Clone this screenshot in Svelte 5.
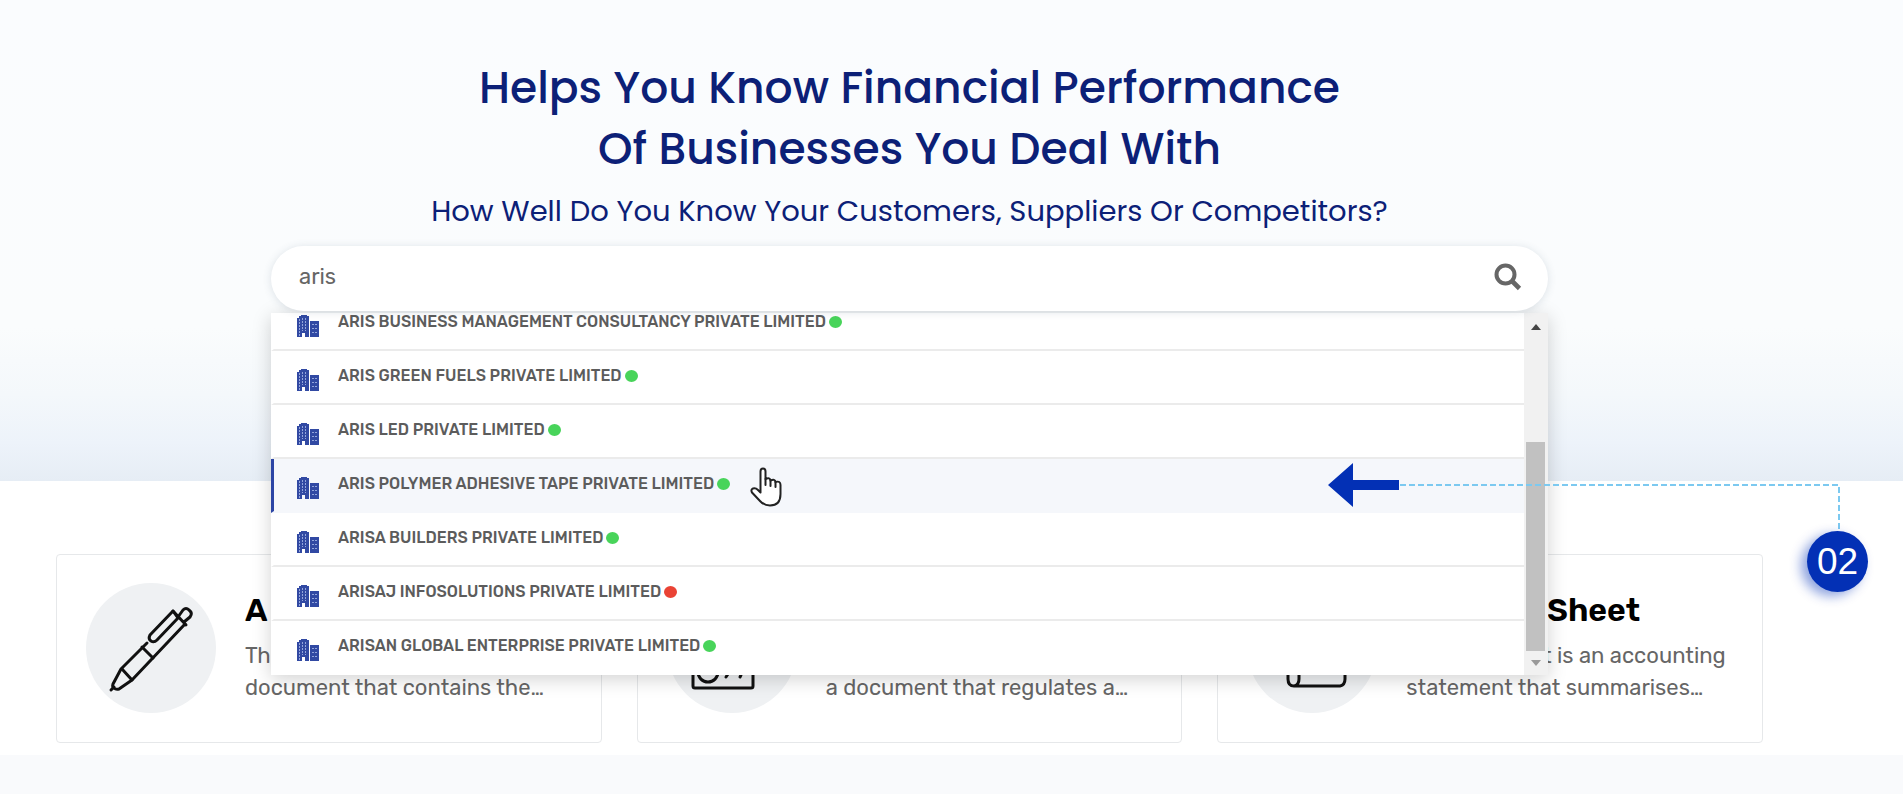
<script>
  const companies = [
    { name: 'ARIS BUSINESS MANAGEMENT CONSULTANCY PRIVATE LIMITED', active: true },
    { name: 'ARIS GREEN FUELS PRIVATE LIMITED', active: true },
    { name: 'ARIS LED PRIVATE LIMITED', active: true },
    { name: 'ARIS POLYMER ADHESIVE TAPE PRIVATE LIMITED', active: true },
    { name: 'ARISA BUILDERS PRIVATE LIMITED', active: true },
    { name: 'ARISAJ INFOSOLUTIONS PRIVATE LIMITED', active: false },
    { name: 'ARISAN GLOBAL ENTERPRISE PRIVATE LIMITED', active: true }
  ];
  const selected = 3;

  const cards = [
    { icon: 'pen', title: ['A', 'OA'], lines: ['The AOA', 'document that contains the…'] },
    { icon: 'seal', title: ['M', 'OA'], lines: ['The MOA is', 'a document that regulates a…'] },
    { icon: 'scroll', title: ['Balance', 'Sheet'], lines: ['Balance sheet is an accounting', 'statement that summarises…'] }
  ];

  let query = $state('aris');
</script>

<div class="page">
  <header class="hero">
    <h1>Helps You Know Financial Performance<br />Of Businesses You Deal With</h1>
    <p class="sub">How Well Do You Know Your Customers, Suppliers Or Competitors?</p>

    <div class="search">
      <form class="bar" onsubmit={(e) => e.preventDefault()}>
        <input type="text" aria-label="Company name" bind:value={query} />
        <button type="submit" aria-label="Search">
          <svg viewBox="0 0 28 28" width="28" height="28">
            <circle cx="11.5" cy="11.5" r="9" fill="none" stroke="#666" stroke-width="4" />
            <path d="M18.5 18.5L25.5 25.5" stroke="#666" stroke-width="4.6" />
          </svg>
        </button>
      </form>

      <div class="menu">
        <ul>
          {#each companies as c, i}
            <li class:selected={i === selected}>
              <a href="#company">
                <svg class="building" viewBox="0 0 22 22" width="22" height="22">
                  <path fill="#3149a3" d="M0 3H2V1H4V0H10V1H12V22H8V18H5V22H0ZM13 6H22V22H13Z" />
                  <path stroke="#93a5dc" stroke-width="1" stroke-dasharray="2 1" fill="none"
                    d="M2.500 4V21M5.500 3V16M8.500 3V16" />
                  <path stroke="#93a5dc" stroke-width="1" stroke-dasharray="2 1" fill="none"
                    d="M15 9.500H21M15 13.500H21M15 17.500H21" />
                </svg>
                <span class="name">{c.name}</span>
                <span class="dot" class:off={!c.active}></span>
              </a>
            </li>
          {/each}
        </ul>
        <div class="track">
          <svg viewBox="0 0 10 6" width="10" height="6"><path d="M0 6L5 0L10 6Z" fill="#444" /></svg>
          <div class="thumb"></div>
          <svg viewBox="0 0 10 6" width="10" height="6"><path d="M0 0L5 6L10 0Z" fill="#999" /></svg>
        </div>

        <svg class="pointer" viewBox="0 0 32 40" width="32" height="40">
          <path fill="#fff" stroke="#222" stroke-width="2" stroke-linejoin="round" stroke-linecap="round"
            d="M10.500 22V4.500Q10.500 1.500 13 1.500Q15.500 1.500 15.500 4.500V12Q20 10 20.500 13.500Q25 11.500 25.500 15Q30.500 13.500 30.500 18V27Q30.500 38.500 20 38.500Q14 38.500 10 34L2 25.500Q0.500 22.500 3 21.500Q5.500 20.500 8 23L10.500 25.500V22" />
          <path fill="none" stroke="#222" stroke-width="2" stroke-linecap="round" d="M15.500 12V18M20.500 13.500V19M25.500 15V20" />
        </svg>
      </div>
    </div>
  </header>

  <main>
    {#each cards as card}
      <article>
        <div class="round">
          {#if card.icon === 'pen'}
            <svg viewBox="0 0 130 130" width="130" height="130">
              <g fill="none" stroke="#111" stroke-width="3" stroke-linecap="round" stroke-linejoin="round">
                <path d="M61 60L35 86L27 101Q26 104 28 105Q30 107 33 106L46 97L99 41" />
                <path d="M28 104L25 107" />
                <path d="M36 86L46 97" />
                <path d="M56 64L67 75" />
                <path d="M87 28L64 52Q62 56 65 58Q68 60 71 57L92 35Z" />
                <path d="M87 28L100 42M92 34L97 27Q100 24 103 27Q107 30 104 34L98 39" />
              </g>
            </svg>
          {:else if card.icon === 'seal'}
            <svg viewBox="0 0 130 130" width="130" height="130">
              <g fill="none" stroke="#111" stroke-width="3" stroke-linecap="round" stroke-linejoin="round">
                <rect x="26" y="28" width="60" height="77" rx="2" />
                <path d="M36 42H76M36 54H76M36 66H76" />
                <circle cx="41" cy="89" r="10" />
                <path d="M59 94L61 91M73 94L74 92" />
              </g>
            </svg>
          {:else}
            <svg viewBox="0 0 130 130" width="130" height="130">
              <g fill="none" stroke="#111" stroke-width="3" stroke-linecap="round" stroke-linejoin="round">
                <path d="M52 90V32H94V90H98V96Q98 102 93 103H47Q41 103 41 96V90H52V96Q52 102 47 103" />
                <path d="M60 46H85M60 58H85M60 70H85" />
              </g>
            </svg>
          {/if}
        </div>
        <div class="body">
          <h2>{#each card.title as word}<span>{word}</span>{/each}</h2>
          <p>{card.lines[0]}<br />{card.lines[1]}</p>
        </div>
      </article>
    {/each}
  </main>

  <div class="step">
    <svg viewBox="0 0 512 70" width="512" height="70">
      <path d="M0 22L25 0V17H71V27H25V44Z" fill="#0330b5" />
      <path d="M72 22H511V69" fill="none" stroke="#7cc9f0" stroke-width="2" stroke-dasharray="6 3" />
    </svg>
    <span>02</span>
  </div>
</div>

<style>
  :global(body) {
    margin: 0;
    background: #f9fafc;
  }

  .page {
    position: relative;
    overflow-x: hidden;
    font-family: Rubik, Roboto, sans-serif;
    color: #666;
  }

  .hero {
    display: flex;
    flex-direction: column;
    align-items: center;
    padding: 57px 140px 170px 56px;
    background: linear-gradient(#fafcfe 0, #fafcfd 68%, #f4f8fb 82%, #edf3fa 92%, #e6edf5 100%);
    text-align: center;
    color: #0c2077;
    font-family: Poppins, Inter, sans-serif;
  }

  h1 {
    margin: 0;
    font-size: 44px;
    line-height: 61px;
    font-weight: 500;
  }

  .sub {
    margin: 9px 0 12px;
    font-size: 29px;
    line-height: 46px;
  }

  .search {
    position: relative;
    width: 100%;
    max-width: 1277px;
    font-family: Rubik, Roboto, sans-serif;
  }

  .bar {
    position: relative;
    z-index: 2;
    display: flex;
    align-items: center;
    height: 65px;
    padding: 0 26px 4px 28px;
    box-sizing: border-box;
    border-radius: 33px;
    background: #fff;
    box-shadow: 0 1px 8px rgba(60, 90, 110, 0.16);
  }

  input {
    flex: 1;
    min-width: 0;
    padding: 0;
    border: 0;
    outline: 0;
    background: none;
    color: #666;
    font: 22px Rubik, Roboto, sans-serif;
  }

  .bar button {
    display: flex;
    padding: 0;
    border: 0;
    background: none;
  }

  .menu {
    position: absolute;
    z-index: 1;
    top: 67px;
    left: 0;
    right: 0;
    display: flex;
    height: 362px;
    background: #fff;
    box-shadow: 0 4px 18px rgba(0, 0, 0, 0.18);
  }

  ul {
    flex: 1;
    display: grid;
    grid-template-rows: 38px repeat(6, 1fr);
    margin: 0;
    padding: 0;
    list-style: none;
    overflow: hidden;
  }

  li {
    display: flex;
    align-items: flex-end;
    box-sizing: border-box;
    border-bottom: 2px solid #ebebeb;
    border-left: 3px solid #fff;
  }

  li:last-child,
  li.selected {
    border-bottom-color: transparent;
  }

  li.selected {
    background: #f5f7fb;
    border-left-color: #2c45a5;
  }

  a {
    flex: 1;
    display: flex;
    align-items: center;
    height: 52px;
    padding-left: 23px;
    color: #5c5c5c;
    text-decoration: none;
    font-size: 16px;
    line-height: 18px;
    font-weight: 500;
  }

  .building {
    margin: 6px 19px 0 0;
  }

  .name,
  .dot {
    margin-bottom: 2px;
  }

  .dot {
    width: 13px;
    height: 12px;
    margin-left: 3px;
    border-radius: 50%;
    background: #48d45a;
  }

  .dot.off {
    background: #ea4335;
  }

  .track {
    display: flex;
    flex-direction: column;
    align-items: center;
    justify-content: space-between;
    width: 24px;
    padding: 11px 1px 9px 0;
    box-sizing: border-box;
    background: #f1f1f1;
  }

  .thumb {
    width: 19px;
    height: 209px;
    margin: auto 0 9px;
    background: #c1c1c1;
  }

  .pointer {
    position: absolute;
    left: 479px;
    top: 154px;
  }

  main {
    display: grid;
    grid-template-columns: repeat(3, 1fr);
    gap: 35px;
    padding: 73px 140px 12px 56px;
    background: #fff;
  }

  article {
    display: flex;
    gap: 29px;
    padding: 28px 28px 29px 29px;
    border: 1px solid #e6e8ea;
    border-radius: 4px;
    background: #fff;
  }

  .round {
    flex: none;
    width: 130px;
    height: 130px;
    border-radius: 50%;
    background: #eff1f3;
  }

  .body {
    padding-top: 8px;
    white-space: nowrap;
  }

  h2 {
    display: flex;
    gap: 15px;
    margin: 0;
    color: #000;
    font-size: 32px;
    line-height: 38px;
    font-weight: 600;
  }

  p {
    margin: 11px 0 0;
    font-size: 22px;
    line-height: 32px;
  }

  .step {
    position: absolute;
    top: 463px;
    right: 35px;
    display: flex;
    flex-direction: column;
    align-items: flex-end;
    width: 540px;
  }

  .step svg {
    margin-right: 28px;
  }

  .step span {
    width: 61px;
    margin-top: -2px;
    border-radius: 50%;
    background: #0330b5;
    box-shadow: -6px 4px 12px rgba(3, 48, 181, 0.45);
    color: #fff;
    text-align: center;
    font: 37px/61px 'Liberation Sans', sans-serif;
  }

  .hero,
  .step {
    z-index: 1;
  }
</style>
